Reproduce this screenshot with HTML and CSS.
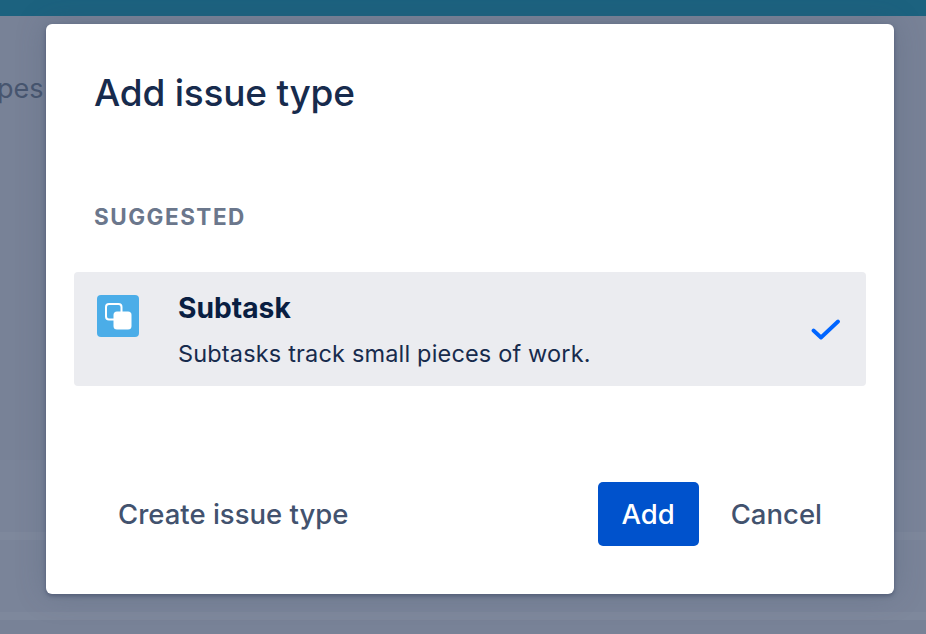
FILE: index.html
```html
<!DOCTYPE html>
<html lang="en">
<head>
  <meta charset="UTF-8" />
  <meta name="viewport" content="width=device-width, initial-scale=1.0" />
  <title>Add issue type</title>
  <link rel="stylesheet" href="styles.css">
</head>
<body>
  <div class="top-bar"></div>

  <div class="behind">
    <div class="behind-title">pes</div>
    <div class="behind-row"></div>
    <div class="behind-row"></div>
  </div>

  <div class="overlay">
    <div class="modal">
      <h1 class="modal-title">Add issue type</h1>
      <div class="section-label">SUGGESTED</div>

      <div class="type-row">
        <div class="type-icon">
          <svg width="42" height="42" viewBox="0 0 42 42">
            <rect width="42" height="42" rx="4" fill="#4bade8" />
            <rect x="9" y="9" width="15.5" height="15.5" rx="3" fill="none" stroke="#fff" stroke-width="2" />
            <rect x="16.5" y="16.5" width="18" height="18" rx="3.5" fill="#fff" />
          </svg>
        </div>
        <div class="type-text">
          <div class="type-name">Subtask</div>
          <div class="type-desc">Subtasks track small pieces of work.</div>
        </div>
        <svg class="check" width="30" height="22" viewBox="0 0 30 22">
          <path d="M2.5 11.5 L10 18.5 L27 2.5" fill="none" stroke="#0065ff" stroke-width="3.8" stroke-linecap="round" stroke-linejoin="round" />
        </svg>
      </div>

      <div class="modal-footer">
        <button class="btn btn-link btn-create">Create issue type</button>
        <div class="footer-right">
          <button class="btn btn-primary">Add</button>
          <button class="btn btn-link">Cancel</button>
        </div>
      </div>
    </div>
  </div>
</body>
</html>
```

FILE: styles.css
```css
* {
  box-sizing: border-box;
}

html, body {
  height: 100%;
}

body {
  margin: 0;
  background-color: #788297;
  font-family: Inter, "Noto Sans", sans-serif;
  overflow: hidden;
}

.top-bar {
  height: 16px;
  background-color: #1c627f;
}

.behind {
  padding-top: 58px;
}

.behind-title {
  margin-left: -3px;
  font-size: 27px;
  line-height: 30px;
  color: #47556f;
  white-space: nowrap;
}

.behind-row {
  height: 80px;
  background-color: #7a8499;
  border-bottom: 8px solid #7e889c;
}

.behind-title + .behind-row {
  margin-top: 356px;
}

.overlay {
  position: absolute;
  top: 0;
  left: 0;
  right: 0;
  bottom: 0;
}

.modal {
  position: absolute;
  top: 24px;
  left: 46px;
  width: 848px;
  height: 570px;
  padding: 0 28px;
  display: flex;
  flex-direction: column;
  background-color: #fff;
  border-radius: 6px;
  box-shadow: 0 2px 4px rgba(60, 72, 100, 0.6), 0 0 30px rgba(60, 72, 100, 0.25);
}

.modal-title {
  margin: 46px 0 0 20px;
  font-size: 37px;
  line-height: 46px;
  font-weight: 500;
  letter-spacing: -0.22px;
  color: #172b4d;
}

.section-label {
  margin: 88px 0 0 20px;
  font-size: 22.5px;
  line-height: 26px;
  font-weight: 700;
  letter-spacing: 1.5px;
  color: #6b778c;
}

.type-row {
  margin-top: 42px;
  height: 114px;
  display: flex;
  align-items: flex-start;
  background-color: #ebecf0;
  border-radius: 4px;
}

.type-icon {
  margin: 23px 0 0 23px;
  width: 42px;
  height: 42px;
}

.type-text {
  margin: 19px 0 0 39px;
  flex: 1;
}

.type-name {
  font-size: 28.2px;
  line-height: 34px;
  font-weight: 700;
  color: #091e42;
}

.type-desc {
  margin-top: 14px;
  font-size: 23.5px;
  line-height: 30px;
  letter-spacing: 0.17px;
  color: #172b4d;
}

.check {
  margin: 47px 25px 0 0;
}

.modal-footer {
  margin-top: 96px;
  display: flex;
  align-items: center;
  justify-content: space-between;
}

.footer-right {
  display: flex;
  align-items: center;
  gap: 8px;
  margin-right: 20px;
}

.btn {
  height: 64px;
  border: none;
  border-radius: 5px;
  font-family: inherit;
  font-size: 27.5px;
  font-weight: 500;
  cursor: pointer;
}

.btn-link {
  padding: 0 24px;
  background: none;
  color: #42526e;
}

.btn-create {
  margin-left: 20px;
}

.btn-primary {
  width: 101px;
  background-color: #0052cc;
  color: #fff;
}
```
